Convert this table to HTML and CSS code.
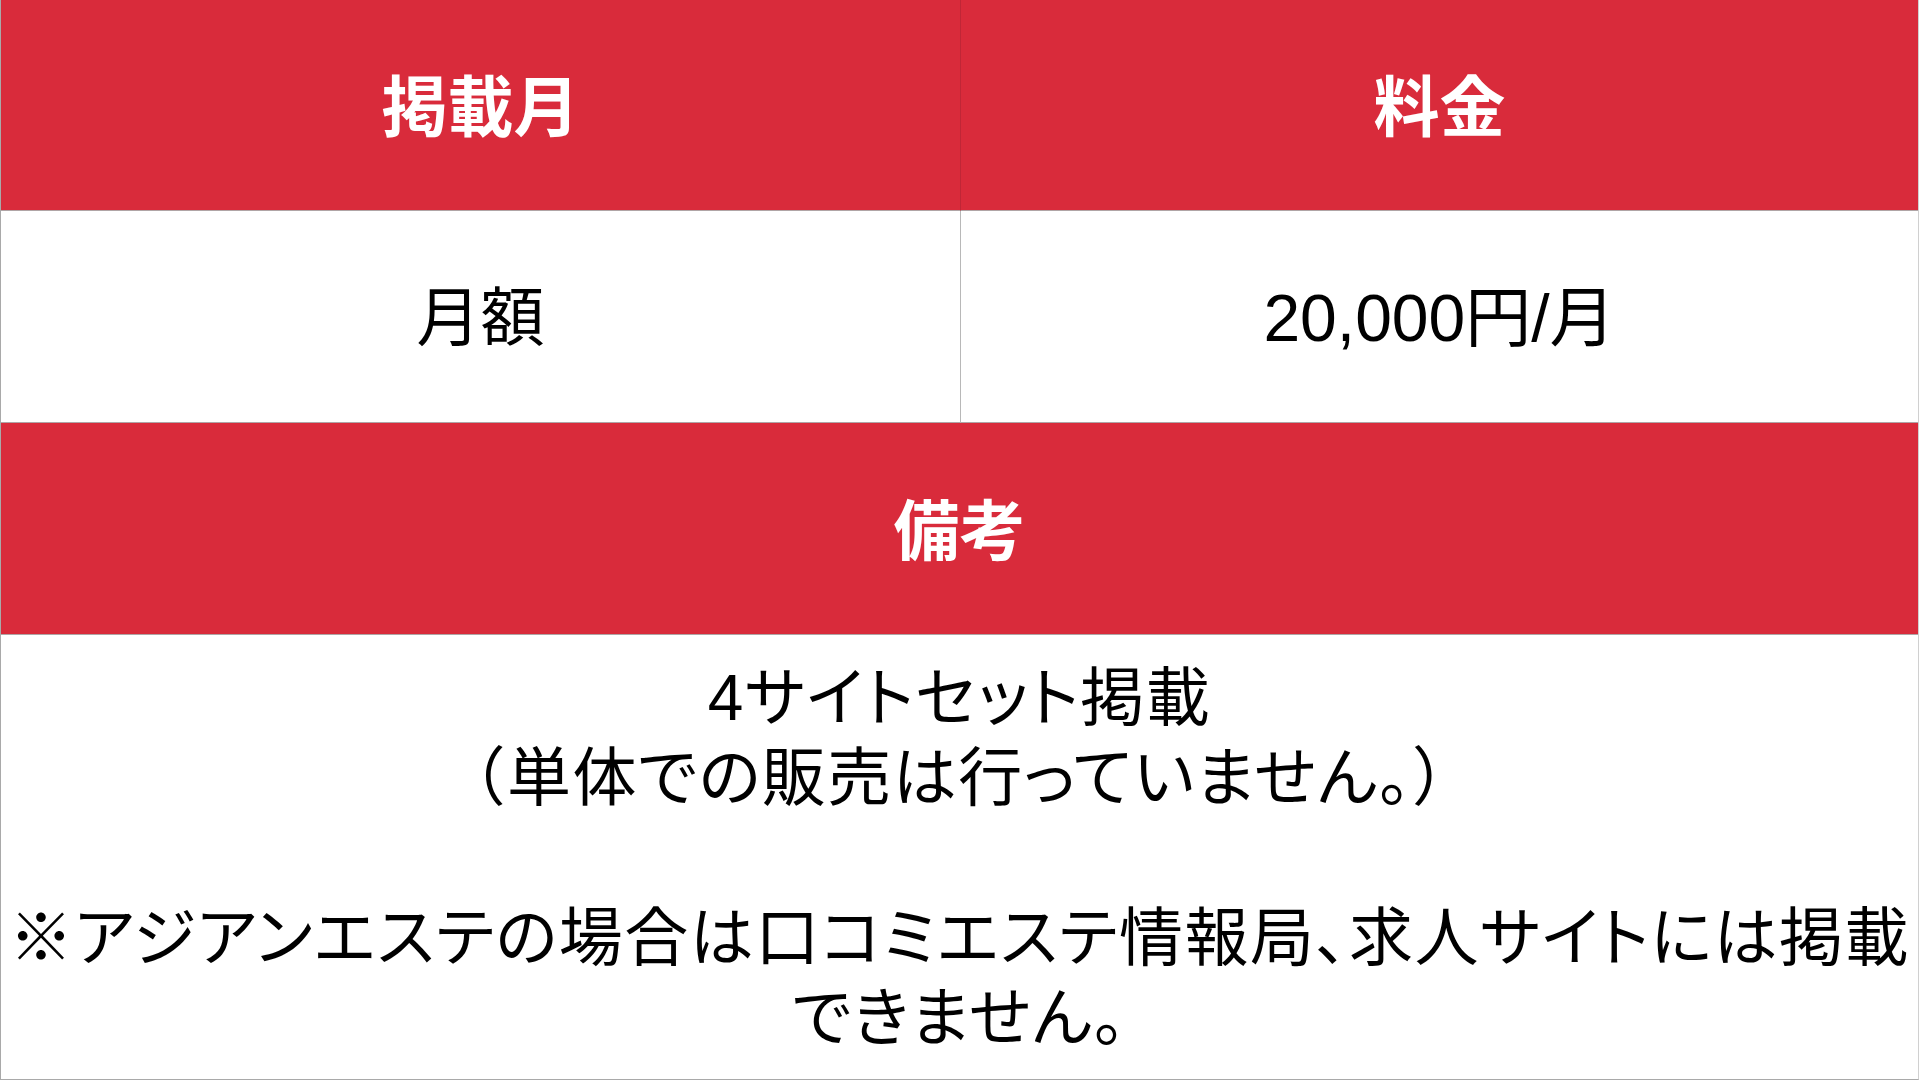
FILE: index.html
```html
<!DOCTYPE html>
<html lang="ja">
<head>
<meta charset="utf-8">
<title>掲載料金</title>
<link rel="stylesheet" href="styles.css">
</head>
<body>
<div class="table">
  <div class="cell head col-left">掲載月</div>
  <div class="cell head">料金</div>
  <div class="cell data col-left">月額</div>
  <div class="cell data price">20,000円/月</div>
  <div class="cell head wide">備考</div>
  <div class="cell note wide"><p class="note-text">4サイトセット掲載<br><span class="paren">（</span>単体での販売は行っていません。<span class="paren">）</span><br><br>※アジアンエステの場合は口コミエステ情報局、求人サイトには掲載<br>できません。</p></div>
</div>
</body>
</html>
```
FILE: styles.css
```css
html, body {
  margin: 0;
  padding: 0;
  background: #ffffff;
}

body {
  width: 1919px;
  height: 1080px;
  overflow: hidden;
  font-family: "Liberation Sans", "Noto Sans CJK JP", sans-serif;
}

.table {
  box-sizing: border-box;
  width: 1919px;
  height: 1080px;
  display: grid;
  grid-template-columns: 960px 1fr;
  grid-template-rows: 211px 212px 212px 1fr;
  border-left: 1px solid #a9a9a9;
  border-bottom: 1px solid #a9a9a9;
  border-right: 1px solid #d0d0d0;
}

.cell {
  display: flex;
  align-items: center;
  justify-content: center;
  text-align: center;
  box-sizing: border-box;
  border-bottom: 1px solid #b0a5a6;
}

.col-left {
  border-right: 1px solid #b8b8b8;
}

.head {
  background: #d92b3b;
  color: #ffffff;
  font-family: "Noto Sans CJK JP", sans-serif;
  font-weight: 700;
  font-size: 66px;
  line-height: 1;
  padding-bottom: 6px;
}

.head.col-left {
  border-right-color: #c02636;
}

.data {
  background: #ffffff;
  color: #000000;
  font-size: 64px;
  line-height: 1;
  padding-top: 2px;
}

.price {
  font-size: 66px;
}

.wide {
  grid-column: 1 / span 2;
}

.note {
  background: #ffffff;
  color: #000000;
  border-bottom: none;
  padding-top: 2px;
}

.note-text {
  margin: 0;
  font-size: 64px;
  line-height: 80px;
  letter-spacing: 1.5px;
  font-feature-settings: "palt";
  white-space: nowrap;
}

.paren {
  font-feature-settings: normal;
}
```
